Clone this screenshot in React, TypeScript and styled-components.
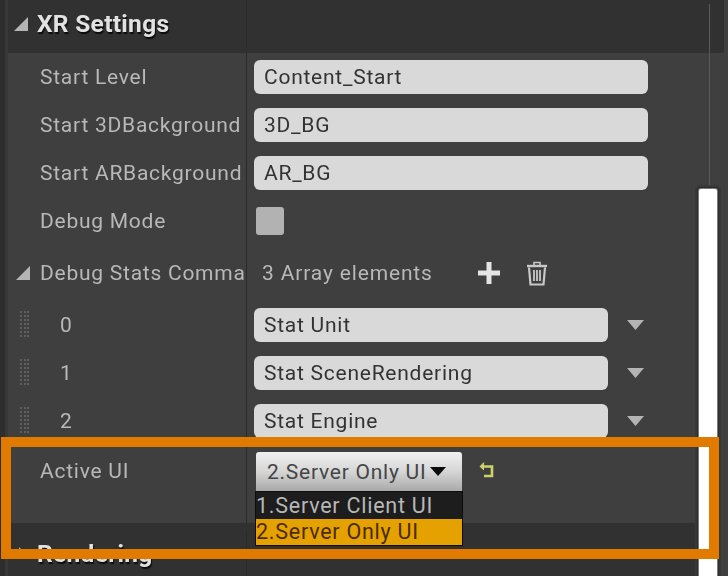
import React from "react";
import styled, { createGlobalStyle } from "styled-components";

const Global = createGlobalStyle`
  html, body { margin: 0; padding: 0; background: #3f3f3f; }
  body { width: 728px; height: 576px; overflow: hidden; font-family: Roboto, "Liberation Sans", sans-serif; }
`;

const Stage = styled.div`
  position: relative;
  width: 728px;
  height: 576px;
  overflow: hidden;
  display: flex;
  background: #3f3f3f;
`;
const Gutter = styled.div`
  width: 3px;
  flex: none;
  background: #383838;
  border-left: 5px solid #2d2d2d;
`;
const Sheet = styled.div`
  flex: 1;
  min-width: 0;
  display: flex;
  flex-direction: column;
  filter: blur(0.75px);
`;
const Section = styled.div<{ $h: number; $low: number; $high?: number; $end: number }>`
  flex: none;
  height: ${(p) => p.$h}px;
  box-sizing: border-box;
  padding: ${(p) => p.$high ?? 0}px 0 ${(p) => p.$low}px;
  margin-right: ${(p) => p.$end}px;
  display: grid;
  grid-template-columns: 239px 1fr;
  background: #313131;
  align-items: center;
`;
const SectionTitle = styled.div`
  display: flex;
  align-items: center;
  gap: 8px;
  padding-left: 5px;
  font-size: 24.5px;
  font-weight: 700;
  color: #e2e2e2;
  letter-spacing: 0.3px;
  text-shadow: 1px 2px 1px #0c0c0c;
`;
const SectionRule = styled.span`
  height: 100%;
  border-left: 1.5px solid #2a2a2a;
  margin-left: -1.5px;
`;
const Row = styled.div<{ $h?: number; $top?: boolean }>`
  flex: none;
  height: ${(p) => p.$h ?? 48}px;
  display: grid;
  grid-template-columns: 239px 1fr;
  align-items: ${(p) => (p.$top ? "start" : "center")};
`;
const LabelCell = styled.div`
  height: 100%;
  display: flex;
  align-items: center;
  padding-left: 32px;
  border-right: 1.5px solid #2a2a2a;
  box-sizing: border-box;
  white-space: nowrap;
  font-size: 21px;
  letter-spacing: 0.75px;
  color: #b8b8b8;
`;
const TreeCell = styled(LabelCell)`
  padding-left: 7px;
  gap: 9px;
`;
const IndexCell = styled(LabelCell)`
  padding-left: 12px;
  gap: 31px;
`;
const ActiveLabel = styled(LabelCell)`
  align-items: flex-start;
  padding-top: 14px;
`;
const ValueCell = styled.div<{ $top?: boolean }>`
  display: flex;
  align-items: ${(p) => (p.$top ? "flex-start" : "center")};
  padding-left: 7px;
`;
const Field = styled.div<{ $w: number }>`
  width: ${(p) => p.$w}px;
  height: 34px;
  box-sizing: border-box;
  display: flex;
  align-items: center;
  padding-left: 10px;
  border-radius: 6px;
  background: #d9d9d9;
  color: #333;
  font-size: 21px;
  letter-spacing: 0.75px;
`;
const Check = styled.div`
  width: 28px;
  height: 28px;
  margin-left: 2px;
  border-radius: 3px;
  background: #b2b2b2;
`;
const ArrayCount = styled.span`
  margin-left: 8px;
  width: 216px;
  flex: none;
  font-size: 21px;
  letter-spacing: 0.85px;
  color: #b8b8b8;
`;
const IconSlot = styled.span`
  display: flex;
  margin-right: 26px;
`;
const Caret = styled.span`
  margin-left: 19px;
  display: flex;
`;
const Combo = styled.div`
  position: relative;
  margin: 7px 0 0 2px;
  width: 206px;
`;
const ComboButton = styled.div`
  height: 39px;
  box-sizing: border-box;
  display: flex;
  align-items: center;
  gap: 4px;
  padding-left: 11px;
  border-radius: 3px 3px 0 0;
  background: linear-gradient(#f0f0f0, #d6d6d6 50%, #a9a9a9);
  color: #454545;
  font-size: 21px;
  letter-spacing: 0.75px;
  white-space: nowrap;
`;
const Menu = styled.div`
  position: absolute;
  top: 39px;
  left: -1px;
  width: 208px;
  height: 55px;
  box-sizing: border-box;
  border: 1px solid #0d0d0d;
  background: #0d0d0d;
  display: flex;
  flex-direction: column;
`;
const MenuItem = styled.div<{ $on?: boolean }>`
  flex: 1;
  display: flex;
  align-items: center;
  font-size: 21.5px;
  letter-spacing: 0.75px;
  white-space: nowrap;
  background: ${(p) => (p.$on ? "#e5a100" : "#1d1d1d")};
  color: ${(p) => (p.$on ? "#4a2c00" : "#b8b8b8")};
`;
const Reset = styled.span`
  margin: 16px 0 0 16px;
  display: flex;
`;
const TrackLine = styled.div`
  position: absolute;
  left: 709px;
  top: 4px;
  width: 1px;
  height: 184px;
  background: #5a5a5a;
`;
const Thumb = styled.div`
  position: absolute;
  left: 699px;
  top: 189px;
  width: 18px;
  height: 387px;
  background: #fff;
  border-radius: 2px 2px 0 0;
  box-shadow: 0 0 0 1px #7a7a7a, 0 0 0 2px #2c2c2c, 0 0 0 4px #383838;
`;
const Highlight = styled.div`
  position: absolute;
  left: 1px;
  top: 437px;
  width: 718px;
  height: 122px;
  box-sizing: border-box;
  border: 10px solid #e07b00;
`;

const Tri = ({ open = true }: { open?: boolean }) => (
  <svg width="16" height="16" viewBox="0 0 16 16" style={{ flex: "none" }}>
    {open ? <path d="M1 15 L15 15 L15 1 Z" fill="#b5b5b5" /> : <path d="M6 2 L12 8 L6 14 Z" fill="#a8a8a8" />}
  </svg>
);
const Grip = () => (
  <svg width="9" height="28" viewBox="0 0 9 28" style={{ flex: "none" }} fill="#5f5f5f">
    {[0, 4, 8, 12, 16, 20, 24].flatMap((y) => [0, 4, 7].map((x) => <rect key={`${x}-${y}`} x={x} y={y} width="2" height="2" />))}
  </svg>
);
const Plus = () => (
  <svg width="22" height="22" viewBox="0 0 22 22"><path d="M8.5 0h5v8.5H22v5h-8.5V22h-5v-8.5H0v-5h8.5z" fill="#e4e4e4" /></svg>
);
const Trash = () => (
  <svg width="22" height="25" viewBox="0 0 22 25" fill="none" stroke="#c8c8c8">
    <path d="M1 5h20" strokeWidth="2.4" />
    <path d="M8 4V1.5h6V4" strokeWidth="1.6" />
    <path d="M3 6.5 L4.5 23.5 H17.5 L19 6.5" strokeWidth="2.2" />
    <path d="M8 9v11M11 9v11M14 9v11" strokeWidth="1.8" />
  </svg>
);
const DownTri = () => (
  <svg width="17" height="10" viewBox="0 0 17 10"><path d="M0 0h17l-8.5 10z" fill="#b4b4b4" /></svg>
);
const ComboTri = () => (
  <svg width="16" height="9" viewBox="0 0 16 9" style={{ flex: "none" }}><path d="M0 0h16l-8 9z" fill="#0c0c0c" /></svg>
);
const ResetIcon = () => (
  <svg width="17" height="17" viewBox="0 0 17 17" fill="none" stroke="#ccd36a" strokeWidth="2.6">
    <path d="M3 5.5h11v9.5H6" />
    <path d="M6 1.5 L2 5.5 L6 9" fill="#ccd36a" strokeWidth="1" />
  </svg>
);

const levels: [string, string][] = [
  ["Start Level", "Content_Start"],
  ["Start 3DBackground", "3D_BG"],
  ["Start ARBackground", "AR_BG"],
];
const stats = ["Stat Unit", "Stat SceneRendering", "Stat Engine"];

export default function App() {
  return (
    <Stage>
      <Global />
      <Gutter />
      <Sheet>
        <Section $h={53} $low={6} $end={4}>
          <SectionTitle>
            <Tri />
            XR Settings
          </SectionTitle>
          <SectionRule />
        </Section>
        {levels.map(([l, v]) => (
          <Row key={l}>
            <LabelCell>{l}</LabelCell>
            <ValueCell>
              <Field $w={394}>{v}</Field>
            </ValueCell>
          </Row>
        ))}
        <Row>
          <LabelCell>Debug Mode</LabelCell>
          <ValueCell>
            <Check />
          </ValueCell>
        </Row>
        <Row $h={56}>
          <TreeCell>
            <Tri />
            Debug Stats Comma
          </TreeCell>
          <ValueCell>
            <ArrayCount>3 Array elements</ArrayCount>
            <IconSlot>
              <Plus />
            </IconSlot>
            <IconSlot>
              <Trash />
            </IconSlot>
          </ValueCell>
        </Row>
        {stats.map((s, i) => (
          <Row key={s}>
            <IndexCell>
              <Grip />
              {i}
            </IndexCell>
            <ValueCell>
              <Field $w={354}>{s}</Field>
              <Caret>
                <DownTri />
              </Caret>
            </ValueCell>
          </Row>
        ))}
        <Row $h={78} $top>
          <ActiveLabel>Active UI</ActiveLabel>
          <ValueCell $top>
            <Combo>
              <ComboButton>
                2.Server Only UI
                <ComboTri />
              </ComboButton>
              <Menu>
                <MenuItem>1.Server Client UI</MenuItem>
                <MenuItem $on>2.Server Only UI</MenuItem>
              </Menu>
            </Combo>
            <Reset>
              <ResetIcon />
            </Reset>
          </ValueCell>
        </Row>
        <Section $h={53} $low={0} $high={7} $end={32}>
          <SectionTitle>
            <Tri open={false} />
            Rendering
          </SectionTitle>
          <SectionRule />
        </Section>
      </Sheet>
      <TrackLine />
      <Thumb />
      <Highlight />
    </Stage>
  );
}
